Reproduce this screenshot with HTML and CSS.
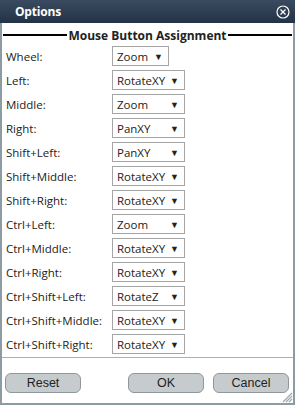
FILE: index.html
```html
<!DOCTYPE html>
<html>
<head>
<meta charset="utf-8">
<link rel="stylesheet" href="styles.css">
</head>
<body>
<div class="dialog">
  <div class="titlebar">
    <span class="title">Options</span>
    <svg class="close" width="14" height="14" viewBox="0 0 14 14">
      <circle cx="7" cy="7" r="6" fill="none" stroke="#fff" stroke-width="1.2"/>
      <path d="M4.5 4.5 L9.5 9.5 M9.5 4.5 L4.5 9.5" stroke="#fff" stroke-width="1.2"/>
    </svg>
  </div>
  <div class="content">
    <div class="legend"><span class="line"></span><span class="legend-text">Mouse Button Assignment</span><span class="line"></span></div>
    <div class="rows">
      <div class="row"><span class="label">Wheel:</span><span class="sel w57">Zoom<i>▼</i></span></div>
      <div class="row"><span class="label">Left:</span><span class="sel">RotateXY<i>▼</i></span></div>
      <div class="row"><span class="label">Middle:</span><span class="sel">Zoom<i>▼</i></span></div>
      <div class="row"><span class="label">Right:</span><span class="sel">PanXY<i>▼</i></span></div>
      <div class="row"><span class="label">Shift+Left:</span><span class="sel">PanXY<i>▼</i></span></div>
      <div class="row"><span class="label">Shift+Middle:</span><span class="sel">RotateXY<i>▼</i></span></div>
      <div class="row"><span class="label">Shift+Right:</span><span class="sel">RotateXY<i>▼</i></span></div>
      <div class="row"><span class="label">Ctrl+Left:</span><span class="sel">Zoom<i>▼</i></span></div>
      <div class="row"><span class="label">Ctrl+Middle:</span><span class="sel">RotateXY<i>▼</i></span></div>
      <div class="row"><span class="label">Ctrl+Right:</span><span class="sel">RotateXY<i>▼</i></span></div>
      <div class="row"><span class="label">Ctrl+Shift+Left:</span><span class="sel">RotateZ<i>▼</i></span></div>
      <div class="row"><span class="label">Ctrl+Shift+Middle:</span><span class="sel">RotateXY<i>▼</i></span></div>
      <div class="row"><span class="label">Ctrl+Shift+Right:</span><span class="sel">RotateXY<i>▼</i></span></div>
    </div>
  </div>
  <div class="buttons">
    <button class="btn">Reset</button>
    <span class="spacer"></span>
    <button class="btn">OK</button>
    <button class="btn">Cancel</button>
  </div>
  <svg class="grip" width="12" height="12" viewBox="0 0 12 12">
    <path d="M11 2 L2 11 M11 5 L5 11 M11 8 L8 11" stroke="#9aa6ad" stroke-width="1.2"/>
  </svg>
</div>
</body>
</html>
```

FILE: styles.css
```css
html, body {
  margin: 0;
  padding: 0;
  background: #fff;
}
.dialog {
  position: relative;
  width: 295px;
  height: 405px;
  box-sizing: border-box;
  border: 2px solid #8d9ba3;
  border-top: none;
  background: #fff;
  display: flex;
  flex-direction: column;
  font-family: "Open Sans", "Noto Sans", sans-serif;
}
.titlebar {
  height: 23px;
  margin: 0 -2px;
  background: linear-gradient(#3a4a60, #243246);
  display: flex;
  align-items: center;
  padding: 0 5px 0 15px;
  color: #fff;
}
.title {
  flex: 1;
  font-weight: bold;
  font-size: 12px;
  letter-spacing: -0.2px;
}
.close {
  display: block;
}
.content {
  flex: 1;
  border-bottom: 1px solid #a8b1b6;
  padding: 0 1px;
}
.legend {
  display: flex;
  align-items: center;
  margin-top: 4px;
  height: 16px;
}
.line {
  flex: 1;
  height: 2px;
  background: #000;
}
.legend-text {
  font-weight: bold;
  font-size: 12px;
  color: #222;
  padding: 0 1px;
}
.rows {
  display: flex;
  flex-direction: column;
  gap: 4px;
  padding: 3px 0 0 3px;
}
.row {
  display: flex;
  align-items: center;
  height: 20px;
}
.label {
  width: 106px;
  font-size: 11.5px;
  color: #222;
}
.sel {
  box-sizing: border-box;
  width: 73px;
  height: 20px;
  border: 1px solid #a5a5a5;
  display: flex;
  align-items: center;
  justify-content: space-between;
  padding: 0 5px 0 4px;
  font-size: 11.5px;
  color: #222;
}
.sel i {
  font-style: normal;
  font-size: 9px;
}
.sel.w57 {
  width: 57px;
}
.buttons {
  display: flex;
  gap: 9px;
  padding: 15px 4px 10px 3px;
  height: 20px;
}
.spacer {
  flex: 1;
}
.btn {
  width: 76px;
  height: 20px;
  border: 1px solid #8e979c;
  border-radius: 6px;
  background: #c6cbce;
  font-family: "Liberation Sans", Arial, sans-serif;
  font-size: 12.5px;
  color: #222;
  padding: 0;
}
.grip {
  position: absolute;
  right: 0;
  bottom: 0;
}
```
